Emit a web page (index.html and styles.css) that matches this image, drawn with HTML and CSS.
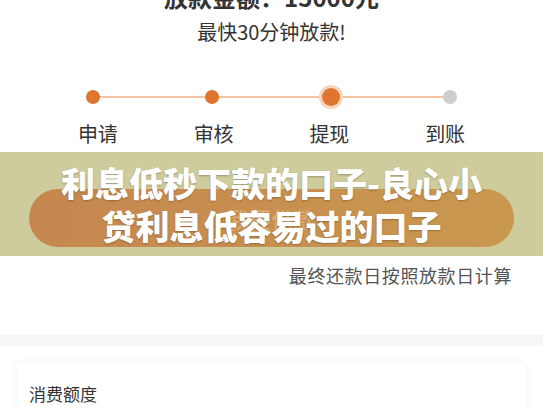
FILE: index.html
```html
<!DOCTYPE html>
<html lang="zh-CN">
    <head>
        <meta charset="utf-8">
        <link rel="stylesheet" href="styles.css">
    </head>
    <body>
        <div class="page">
            <div class="amount">
                <div class="amount-title">放款金额：15000元</div>
                <div class="amount-sub">最快30分钟放款!</div>
            </div>

            <div class="steps">
                <div class="track">
                    <div class="step"><span class="dot done"></span></div>
                    <div class="step"><span class="dot done"></span></div>
                    <div class="step"><span class="dot current"></span></div>
                    <div class="step"><span class="dot"></span></div>
                </div>
                <div class="labels">
                    <span>申请</span>
                    <span>审核</span>
                    <span>提现</span>
                    <span>到账</span>
                </div>
            </div>

            <div class="banner">
                <div class="pill"><span>我要借款</span></div>
                <div class="banner-title">利息低秒下款的口子-良心小贷利息低容易过的口子</div>
            </div>

            <div class="note">最终还款日按照放款日计算</div>

            <div class="divider"></div>

            <div class="card">
                <div class="card-title">消费额度</div>
            </div>
        </div>
    </body>
</html>
```

FILE: styles.css
```css
* {
    box-sizing: border-box;
}

body {
    margin: 0;
    padding: 0;
    background: #fff;
    font-family: "Noto Sans CJK SC", "Noto Sans", sans-serif;
    color: #333;
    overflow: hidden;
}

.page {
    width: 543px;
}

/* top amount block, page is scrolled a little so title is cut */
.amount {
    text-align: center;
}

.amount-title {
    margin-top: -19px;
    font-size: 24px;
    line-height: 32px;
    font-weight: 700;
}

.amount-sub {
    margin-top: 5px;
    font-size: 20px;
    line-height: 28px;
}

/* progress steps */
.steps {
    margin-top: 39px;
}

.track {
    position: relative;
    display: grid;
    grid-template-columns: repeat(4, 1fr);
    height: 24px;
    padding: 0 34px;
}

.track:before {
    content: "";
    position: absolute;
    left: 93px;
    right: 94px;
    top: 11px;
    height: 2px;
    background: #f2c49f;
}

.step {
    position: relative;
    display: flex;
    align-items: center;
    justify-content: center;
}

.dot {
    width: 14px;
    height: 14px;
    border-radius: 50%;
    background: #cdcdcd;
}

.dot.done {
    background: #e0752f;
}

.dot.current {
    width: 18px;
    height: 18px;
    background: #e0752f;
    box-shadow: 0 0 0 3px #f7d6bd;
}

.labels {
    display: grid;
    grid-template-columns: repeat(4, 1fr);
    padding: 0 40px;
    margin-top: 11px;
    font-size: 20px;
    line-height: 28px;
    text-align: center;
}

/* banner with the article title over the button */
.banner {
    position: relative;
    margin-top: 4px;
    height: 104px;
    padding: 37px 29px 9px;
    background: #cecb9c;
}

.pill {
    height: 58px;
    border-radius: 29px;
    background: linear-gradient(90deg, #c6874f, #c9984f);
    display: flex;
    align-items: center;
    justify-content: center;
    font-size: 22px;
    color: #dcae80;
}

.banner-title {
    position: absolute;
    top: 0;
    left: 0;
    right: 0;
    bottom: 0;
    display: flex;
    align-items: center;
    justify-content: center;
    padding: 0 56px;
    text-align: center;
    font-size: 34px;
    line-height: 43px;
    font-weight: 900;
    color: #fff;
    text-shadow: 0 1px 2px rgba(0, 0, 0, 0.25);
}

.note {
    margin-top: 6px;
    padding-right: 31px;
    text-align: right;
    font-size: 18px;
    line-height: 26px;
    letter-spacing: 0.6px;
    color: #555;
}

.divider {
    margin-top: 47px;
    height: 11px;
    background: #f6f7f9;
}

.card {
    margin: 17px 17px 0;
    height: 80px;
    padding: 19px 12px 0;
    border-radius: 4px;
    background: #fff;
    box-shadow: 0 0 10px rgba(0, 0, 0, 0.06);
}

.card-title {
    font-size: 17px;
    line-height: 24px;
    color: #333;
}
```
